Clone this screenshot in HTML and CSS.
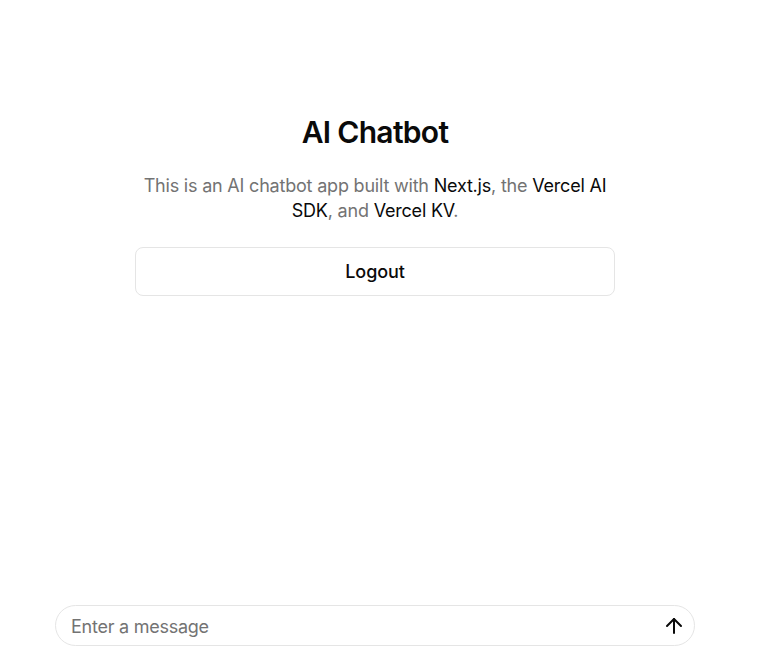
FILE: index.html
```html
<!DOCTYPE html>
<html lang="en">
<head>
<meta charset="utf-8">
<title>AI Chatbot</title>
<link rel="stylesheet" href="styles.css">
</head>
<body>
<div class="page">
  <main class="intro">
    <h1 class="title">AI Chatbot</h1>
    <p class="desc">This is an AI chatbot app built with <a class="link" href="#">Next.js</a>, the <a class="link" href="#">Vercel AI SDK</a>, and <a class="link" href="#">Vercel KV</a>.</p>
    <button class="logout" type="button">Logout</button>
  </main>
  <form class="composer">
    <input class="composer-input" type="text" placeholder="Enter a message">
    <button class="send" type="button" aria-label="Send">
      <svg width="24" height="24" viewBox="0 0 24 24" fill="none" stroke="currentColor" stroke-width="2" stroke-linecap="round" stroke-linejoin="round"><path d="m5 12 7-7 7 7"/><path d="M12 19V5"/></svg>
    </button>
  </form>
</div>
</body>
</html>
```
FILE: styles.css
```css
* { box-sizing: border-box; }
html, body { margin: 0; padding: 0; background: #fff; }
body {
  font-family: Inter, "Noto Sans", "Liberation Sans", sans-serif;
  color: #0a0a0a;
}
.page {
  width: 750px;
  height: 668px;
  display: flex;
  flex-direction: column;
  align-items: center;
}
.intro {
  width: 480px;
  padding-top: 114px;
  display: flex;
  flex-direction: column;
  align-items: center;
  flex: 1;
}
.title {
  margin: 0;
  font-size: 30px;
  line-height: 36px;
  font-weight: 600;
  letter-spacing: -0.7px;
  color: #0a0a0a;
}
.desc {
  margin: 23px 0 0;
  font-size: 18px;
  line-height: 25px;
  letter-spacing: -0.2px;
  text-align: center;
  color: #737373;
}
.link {
  color: #0a0a0a;
  text-decoration: none;
}
.logout {
  margin-top: 24px;
  width: 480px;
  height: 49px;
  border: 1px solid #e5e5e5;
  border-radius: 8px;
  background: #fff;
  font-family: inherit;
  font-size: 18px;
  font-weight: 500;
  letter-spacing: -0.1px;
  color: #0a0a0a;
}
.composer {
  width: 640px;
  height: 41px;
  margin-bottom: 22px;
  border: 1px solid #e5e5e5;
  border-radius: 999px;
  display: flex;
  align-items: center;
  padding: 0 8px 0 15px;
}
.composer-input {
  flex: 1;
  border: 0;
  outline: none;
  background: transparent;
  font-family: inherit;
  font-size: 18px;
  letter-spacing: -0.25px;
  color: #0a0a0a;
  padding: 2px 0 0;
}
.composer-input::placeholder { color: #737373; }
.send {
  border: 0;
  background: transparent;
  padding: 0;
  width: 24px;
  height: 24px;
  display: flex;
  align-items: center;
  justify-content: center;
  color: #0a0a0a;
}
```
